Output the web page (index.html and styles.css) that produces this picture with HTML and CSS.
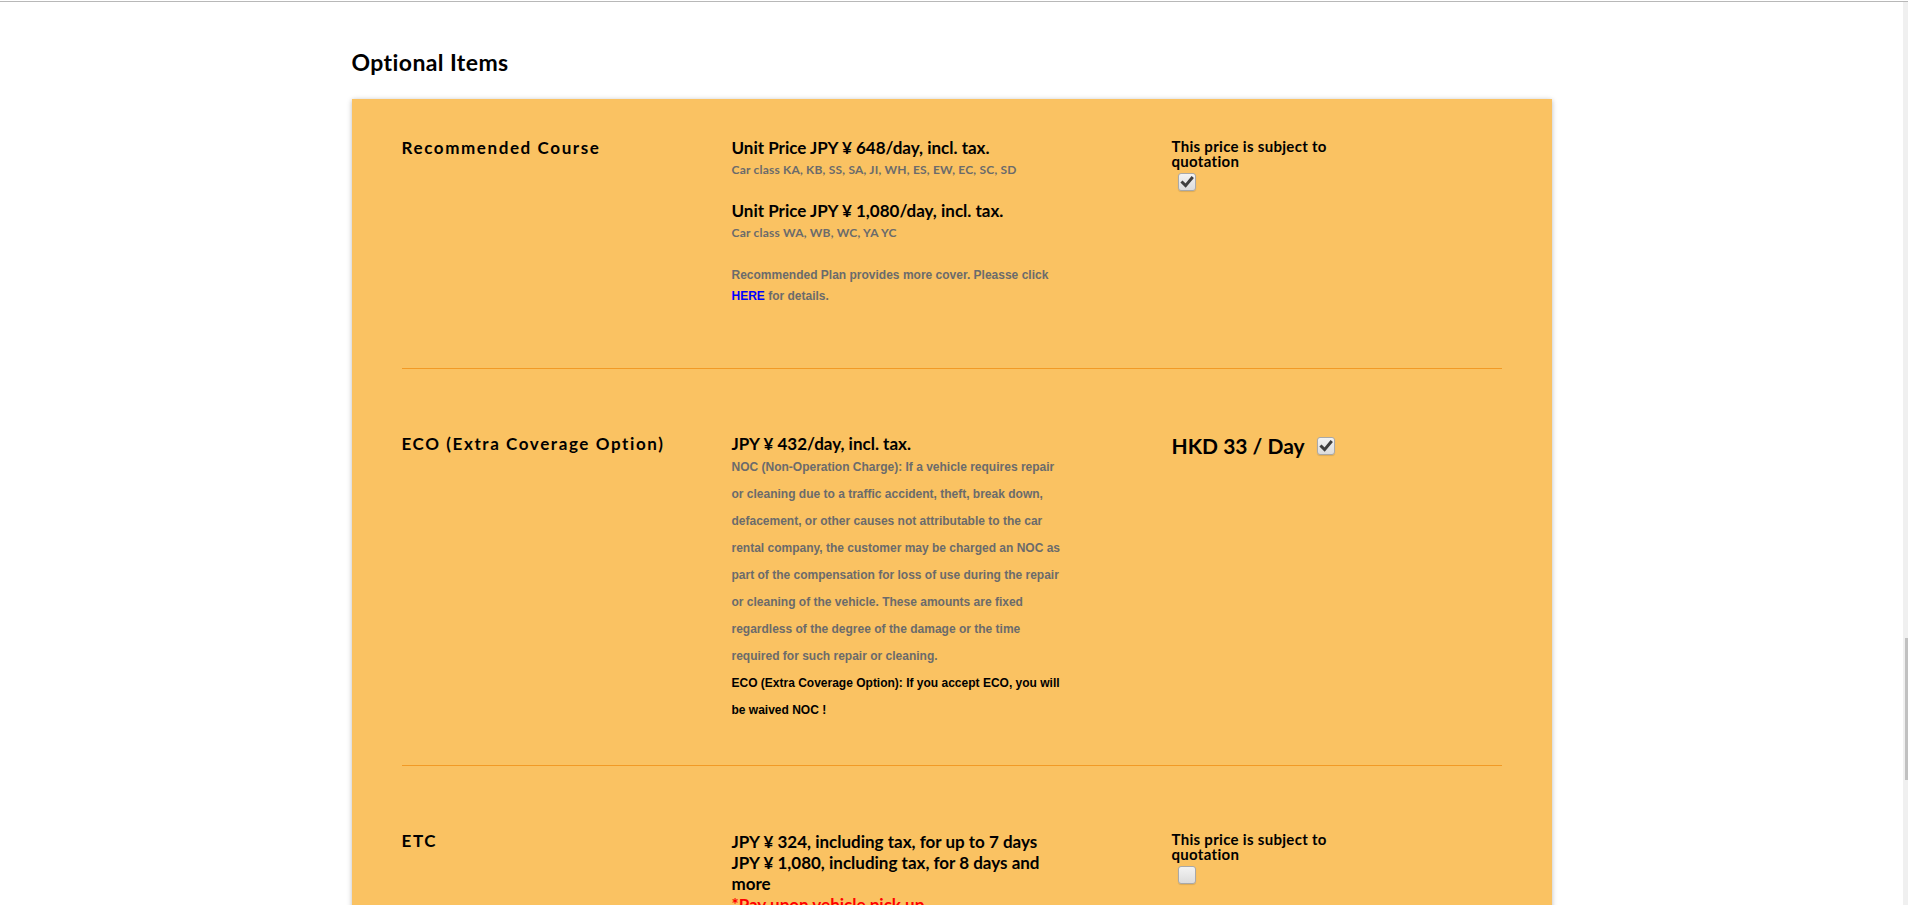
FILE: index.html
```html
<!DOCTYPE html>
<html lang="en">
<head>
<meta charset="utf-8">
<title>Optional Items</title>
<link rel="stylesheet" href="styles.css">
</head>
<body>
<div class="topline"></div>
<div class="viewport">
  <div class="page">
    <h2 class="title">Optional Items</h2>
    <div class="card">
      <div class="row row-first">
        <div class="name">Recommended Course</div>
        <div class="detail">
          <div class="price">Unit Price JPY ¥ 648/day, incl. tax.</div>
          <div class="cls">Car class KA, KB, SS, SA, JI, WH, ES, EW, EC, SC, SD</div>
          <div class="price price-next">Unit Price JPY ¥ 1,080/day, incl. tax.</div>
          <div class="cls">Car class WA, WB, WC, YA YC</div>
          <p class="note">Recommended Plan provides more cover. Pleasse click <a class="link" href="#">HERE</a> for details.</p>
        </div>
        <div class="action">
          <div class="quote">This price is subject to quotation</div>
          <span class="cb cb-quote checked"><svg viewBox="0 0 18 18" width="18" height="18"><path d="M4.5 9.5 L7.6 12.6 L13.8 5.2" fill="none" stroke="#3f3f3f" stroke-width="3" stroke-linecap="square"/></svg></span>
        </div>
      </div>

      <div class="row">
        <div class="name">ECO (Extra Coverage Option)</div>
        <div class="detail">
          <div class="price">JPY ¥ 432/day, incl. tax.</div>
          <p class="noc">NOC (Non-Operation Charge): If a vehicle requires repair or cleaning due to a traffic accident, theft, break down, defacement, or other causes not attributable to the car rental company, the customer may be charged an NOC as part of the compensation for loss of use during the repair or cleaning of the vehicle. These amounts are fixed regardless of the degree of the damage or the time required for such repair or cleaning.</p>
          <p class="noc noc-strong">ECO (Extra Coverage Option): If you accept ECO, you will be waived NOC !</p>
        </div>
        <div class="action action-inline">
          <span class="hkd">HKD 33 / Day</span>
          <span class="cb checked"><svg viewBox="0 0 18 18" width="18" height="18"><path d="M4.5 9.5 L7.6 12.6 L13.8 5.2" fill="none" stroke="#3f3f3f" stroke-width="3" stroke-linecap="square"/></svg></span>
        </div>
      </div>

      <div class="row row-last">
        <div class="name">ETC</div>
        <div class="detail">
          <div class="etc">JPY ¥ 324, including tax, for up to 7 days<br>JPY ¥ 1,080, including tax, for 8 days and more</div>
          <div class="etc etc-red">*Pay upon vehicle pick up</div>
        </div>
        <div class="action">
          <div class="quote">This price is subject to quotation</div>
          <span class="cb cb-quote"></span>
        </div>
      </div>
    </div>
  </div>
</div>
<div class="scrollbar"><div class="thumb"></div></div>
</body>
</html>
```

FILE: styles.css
```css
html, body {
  margin: 0;
  padding: 0;
  height: 100%;
  overflow: hidden;
  background: #ffffff;
}

body {
  font-family: "Lato", "Liberation Sans", sans-serif;
  color: #000;
}

.topline {
  height: 1px;
  margin-top: 1px;
  background: #b8b8b8;
}

.viewport {
  margin-right: 5px;
}

.page {
  width: 1200px;
  margin: 0 auto;
}

.title {
  margin: 47px 0 24px;
  font-size: 23px;
  line-height: 26px;
  letter-spacing: 0.4px;
  font-weight: 700;
}

.card {
  background: #fac262;
  padding: 0 50px;
  box-shadow: 0 1px 5px rgba(0, 0, 0, 0.28);
}

.row {
  display: grid;
  grid-template-columns: 330px 440px 330px;
  padding: 65px 0 40px;
  border-bottom: 1px solid #f29a25;
}

.row-first {
  padding-top: 39px;
}

.row-last {
  border-bottom: none;
}

.name {
  font-size: 17px;
  line-height: 20px;
  letter-spacing: 1.6px;
  font-weight: 700;
}

.detail {
  max-width: 336px;
}

.price {
  font-size: 17px;
  line-height: 20px;
  font-weight: 700;
}

.price-next {
  margin-top: 23px;
}

.cls {
  margin-top: 4px;
  font-size: 12px;
  line-height: 16px;
  letter-spacing: 0.2px;
  font-weight: 700;
  color: #6b6b6b;
}

.note {
  margin: 24px 0 21px;
  font-family: "Liberation Sans", Arial, sans-serif;
  font-size: 12px;
  line-height: 21px;
  font-weight: 700;
  color: #6b6b6b;
}

.link {
  color: #0000ff;
  text-decoration: none;
}

.noc {
  margin: 0;
  font-family: "Liberation Sans", Arial, sans-serif;
  font-size: 12px;
  line-height: 27px;
  font-weight: 700;
  color: #6b6b6b;
}

.noc-strong {
  margin-bottom: 1px;
  color: #000;
}

.etc {
  font-size: 17px;
  line-height: 21px;
  font-weight: 700;
}

.etc-red {
  color: #ff0000;
}

.action {
  padding-top: 1px;
}

.quote {
  width: 170px;
  font-size: 15px;
  line-height: 15px;
  letter-spacing: 0.3px;
  font-weight: 700;
}

.cb {
  display: inline-flex;
  box-sizing: border-box;
  width: 18px;
  height: 18px;
  border: 1px solid #a9a9a9;
  border-radius: 3px;
  background: linear-gradient(#f3f3f3, #dcdcdc);
  box-shadow: 0 1px 1px rgba(0, 0, 0, 0.12);
  align-items: center;
  justify-content: center;
  vertical-align: middle;
}

.cb svg {
  display: block;
  margin: -1px;
}

.cb-quote {
  margin: 2px 0 0 6px;
}

.action-inline {
  display: flex;
  align-items: center;
  gap: 12px;
  align-self: start;
  padding-top: 0;
}

.hkd {
  font-size: 21px;
  line-height: 24px;
  font-weight: 700;
}

.scrollbar {
  position: fixed;
  top: 2px;
  right: 0;
  bottom: 0;
  width: 5px;
  background: #f0f0f0;
}

.thumb {
  position: absolute;
  top: 636px;
  right: 0;
  width: 3px;
  height: 142px;
  background: #c1c1c1;
}
```
